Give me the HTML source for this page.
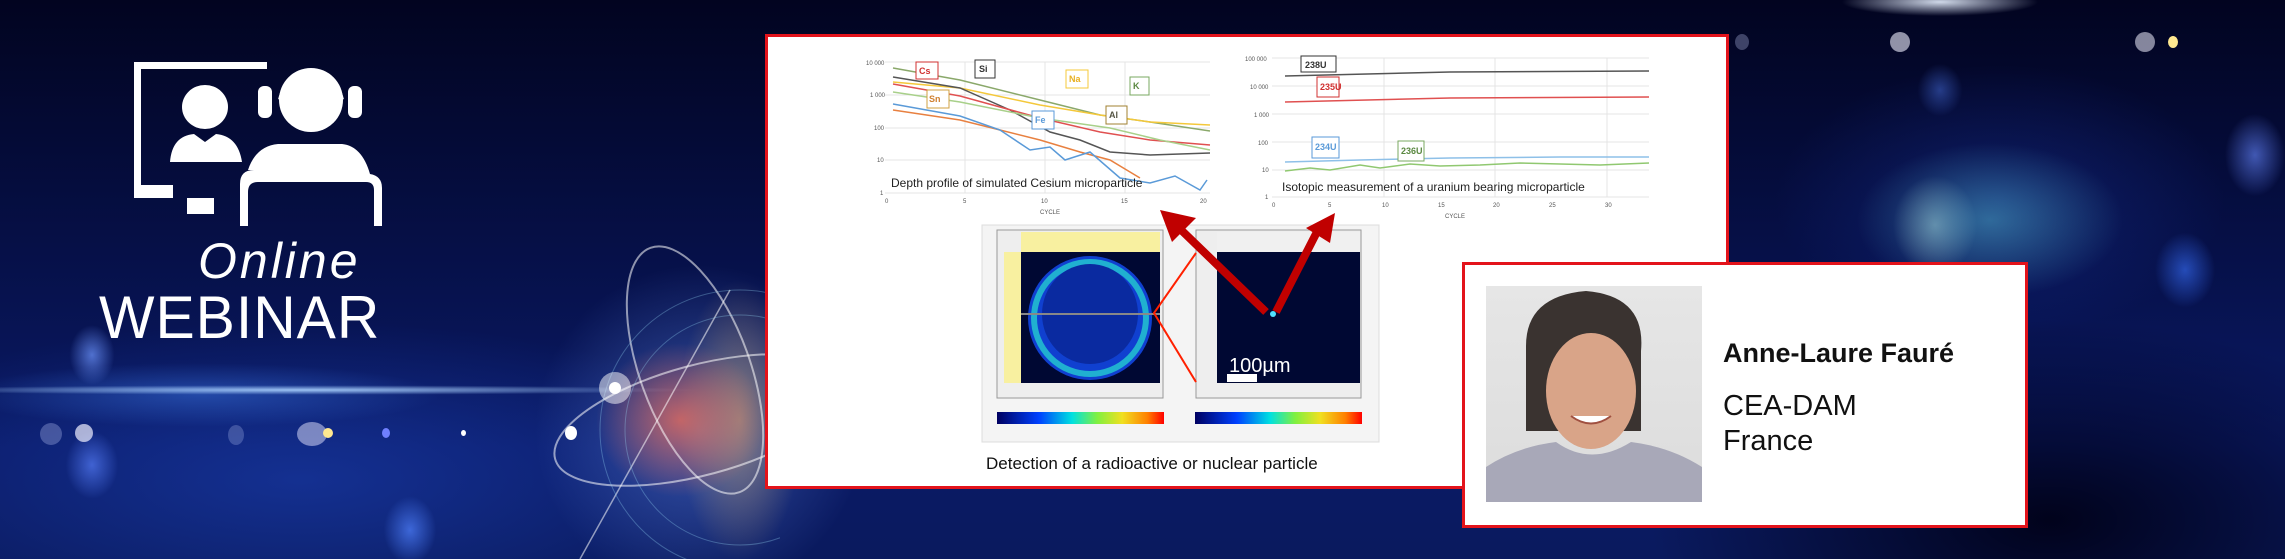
<!DOCTYPE html>
<html><head><meta charset="utf-8"><style>
*{margin:0;padding:0;box-sizing:border-box}
body{width:2285px;height:559px;overflow:hidden;position:relative;font-family:"Liberation Sans",sans-serif;
background:
radial-gradient(ellipse 190px 110px at 1990px 220px,rgba(90,200,220,.45),transparent 70%),
radial-gradient(ellipse 60px 70px at 1935px 225px,rgba(210,240,230,.45),transparent 70%),
radial-gradient(ellipse 40px 55px at 2255px 155px,rgba(90,120,230,.7),transparent 75%),
radial-gradient(ellipse 40px 50px at 2185px 270px,rgba(50,100,230,.7),transparent 75%),
radial-gradient(ellipse 30px 35px at 1940px 90px,rgba(70,110,220,.5),transparent 75%),
radial-gradient(ellipse 300px 180px at 2000px 200px,rgba(30,60,180,.35),transparent 75%),
radial-gradient(ellipse 140px 20px at 1940px 2px,rgba(230,240,255,.9),transparent 70%),
radial-gradient(ellipse 500px 250px at 2050px 520px,rgba(0,0,20,.9),transparent 80%),
radial-gradient(ellipse 120px 110px at 680px 420px,rgba(255,110,80,.7),transparent 70%),
radial-gradient(ellipse 90px 200px at 740px 420px,rgba(255,200,110,.45),transparent 70%),
radial-gradient(ellipse 220px 220px at 700px 430px,rgba(100,140,230,.5),transparent 75%),
radial-gradient(ellipse 35px 45px at 92px 465px,rgba(90,130,255,.65),transparent 75%),
radial-gradient(ellipse 30px 40px at 92px 355px,rgba(110,150,255,.7),transparent 75%),
radial-gradient(ellipse 35px 45px at 410px 530px,rgba(80,130,255,.7),transparent 75%),
radial-gradient(ellipse 500px 6px at 300px 390px,rgba(170,210,255,.9),transparent 80%),
radial-gradient(ellipse 300px 40px at 200px 395px,rgba(60,120,230,.45),transparent 80%),
radial-gradient(ellipse 600px 200px at 300px 480px,rgba(30,70,190,.5),transparent 80%),
linear-gradient(180deg,#020420 0%,#061048 45%,#0a1a66 80%,#0a1a5e 100%);}
.abs{position:absolute}
.dot{position:absolute;border-radius:50%}
</style></head><body>

<div class="dot" style="left:40px;top:423px;width:22px;height:22px;background:rgba(200,210,255,.3)"></div>
<div class="dot" style="left:75px;top:424px;width:18px;height:18px;background:rgba(240,240,255,.7)"></div>
<div class="dot" style="left:228px;top:425px;width:16px;height:20px;background:rgba(200,210,255,.25)"></div>
<div class="dot" style="left:297px;top:422px;width:30px;height:24px;background:rgba(230,230,255,.5)"></div>
<div class="dot" style="left:323px;top:428px;width:10px;height:10px;background:#ffe890"></div>
<div class="dot" style="left:382px;top:428px;width:8px;height:10px;background:#7080ff"></div>
<div class="dot" style="left:461px;top:430px;width:5px;height:6px;background:#fff"></div>
<div class="dot" style="left:565px;top:426px;width:12px;height:14px;background:#fff"></div>
<div class="dot" style="left:1735px;top:34px;width:14px;height:16px;background:rgba(200,210,255,.3)"></div>
<div class="dot" style="left:1890px;top:32px;width:20px;height:20px;background:rgba(240,240,255,.6)"></div>
<div class="dot" style="left:2135px;top:32px;width:20px;height:20px;background:rgba(240,240,255,.55)"></div>
<div class="dot" style="left:2168px;top:36px;width:10px;height:12px;background:#ffe890"></div>

<!-- atom rings -->
<svg class="abs" style="left:520px;top:220px" width="260" height="339" viewBox="0 0 260 339">
<g fill="none" stroke="rgba(255,255,255,.55)" stroke-width="2">
<ellipse cx="175" cy="150" rx="55" ry="130" transform="rotate(-20 175 150)"/>
<ellipse cx="180" cy="200" rx="150" ry="55" transform="rotate(-15 180 200)"/>
<path d="M60 339 L210 70" stroke-width="1.5"/>
</g>
<g fill="none" stroke="rgba(160,230,255,.3)" stroke-width="1">
<circle cx="220" cy="210" r="140"/><circle cx="220" cy="210" r="115"/>
</g>
<circle cx="95" cy="168" r="16" fill="rgba(255,255,255,.5)"/>
<circle cx="95" cy="168" r="6" fill="#fff"/>
</svg>

<!-- webinar icon -->
<svg class="abs" style="left:130px;top:50px" width="260" height="180" viewBox="0 0 260 180">
<g fill="#fff">
<path d="M4 12 h133 v7 h-126 v116 h32 v13 h-39 z"/>
<rect x="57" y="148" width="27" height="16"/>
<ellipse cx="75" cy="57" rx="23" ry="22"/>
<path d="M40 112 q2 -26 24 -28 l11 8 l11 -8 q22 2 26 28 z"/>
<circle cx="181" cy="50" r="32"/>
<path d="M152 50 a30 33 0 0 1 58 0" fill="none" stroke="#fff" stroke-width="8"/>
<rect x="128" y="36" width="14" height="32" rx="6"/>
<rect x="218" y="36" width="14" height="32" rx="6"/>
<path d="M110 176 v-42 q0 -14 14 -14 h-6 q8 -24 30 -26 h64 q20 2 28 30 q12 2 12 14 v38 h-8 v-36 q0 -8 -8 -8 h-108 q-10 0 -10 10 v34 z"/>
</g>
</svg>
<div class="abs" style="left:198px;top:232px;color:#fff;font-family:'Liberation Sans',sans-serif;font-style:italic;font-size:50px;font-weight:300;letter-spacing:3px">Online</div>
<div class="abs" style="left:99px;top:288px;color:#fff;font-size:60px;letter-spacing:1px;line-height:60px;transform:scaleX(.98);transform-origin:left">WEBINAR</div>

<!-- main white panel -->
<div class="abs" style="left:765px;top:34px;width:964px;height:455px;background:#fff;border:3px solid #e3131b"></div>
<svg class="abs" style="left:768px;top:37px" width="958" height="449" viewBox="768 37 958 449" font-family="Liberation Sans,sans-serif">
<g stroke="#e4e4e4" stroke-width="1">
<line x1="885" y1="62" x2="1210" y2="62"/><line x1="885" y1="95" x2="1210" y2="95"/><line x1="885" y1="128" x2="1210" y2="128"/><line x1="885" y1="160" x2="1210" y2="160"/><line x1="885" y1="193" x2="1210" y2="193"/>
<line x1="965" y1="62" x2="965" y2="193"/><line x1="1045" y1="62" x2="1045" y2="193"/><line x1="1125" y1="62" x2="1125" y2="193"/>
</g>
<g font-size="6" fill="#555"><text x="866" y="65">10 000</text><text x="870" y="97">1 000</text><text x="874" y="130">100</text><text x="877" y="162">10</text><text x="880" y="195">1</text>
<text x="885" y="203">0</text><text x="963" y="203">5</text><text x="1041" y="203">10</text><text x="1121" y="203">15</text><text x="1200" y="203">20</text><text x="1040" y="214">CYCLE</text></g>
<g fill="none" stroke-width="1.5">
<polyline stroke="#8aa86a" points="893,68 960,80 1040,100 1100,115 1150,122 1210,131"/>
<polyline stroke="#f4c83a" points="893,82 960,88 1040,105 1100,115 1150,122 1210,125"/>
<polyline stroke="#555" points="893,77 960,88 1010,110 1050,132 1080,140 1110,152 1150,155 1210,153"/>
<polyline stroke="#e05050" points="893,84 960,96 1040,118 1100,132 1150,140 1210,145"/>
<polyline stroke="#a8d08a" points="893,92 960,102 1040,118 1110,128 1160,140 1210,150"/>
<polyline stroke="#e88040" points="893,110 960,120 1000,130 1040,140 1080,152 1110,160 1140,178"/>
<polyline stroke="#5a9ad8" points="893,104 960,116 1000,130 1030,150 1050,147 1065,160 1090,152 1120,178 1150,183 1175,176 1200,190 1207,180"/>
</g>
<g font-size="9" font-weight="bold">
<rect x="916" y="62" width="22" height="17" fill="#fff" stroke="#d03030"/><text x="919" y="74" fill="#d03030">Cs</text>
<rect x="975" y="60" width="20" height="18" fill="#fff" stroke="#333"/><text x="979" y="72" fill="#333">Si</text>
<rect x="1066" y="70" width="22" height="18" fill="#fff" stroke="#f4c83a"/><text x="1069" y="82" fill="#e8b020">Na</text>
<rect x="1130" y="77" width="19" height="18" fill="#fff" stroke="#7aa860"/><text x="1133" y="89" fill="#5a8840">K</text>
<rect x="927" y="90" width="22" height="18" fill="#fff" stroke="#d0a040"/><text x="929" y="102" fill="#d08030">Sn</text>
<rect x="1032" y="111" width="22" height="18" fill="#fff" stroke="#5a9ad8"/><text x="1035" y="123" fill="#5a9ad8">Fe</text>
<rect x="1106" y="106" width="21" height="18" fill="#fff" stroke="#a08030"/><text x="1109" y="118" fill="#554">Al</text>
</g>
<text x="891" y="187" font-size="12" fill="#222">Depth profile of simulated Cesium microparticle</text>
<g stroke="#e4e4e4" stroke-width="1">
<line x1="1272" y1="58" x2="1649" y2="58"/><line x1="1272" y1="86" x2="1649" y2="86"/><line x1="1272" y1="114" x2="1649" y2="114"/><line x1="1272" y1="142" x2="1649" y2="142"/><line x1="1272" y1="170" x2="1649" y2="170"/><line x1="1272" y1="197" x2="1649" y2="197"/>
<line x1="1384" y1="58" x2="1384" y2="197"/><line x1="1495" y1="58" x2="1495" y2="197"/><line x1="1607" y1="58" x2="1607" y2="197"/>
</g>
<g font-size="6" fill="#555"><text x="1245" y="61">100 000</text><text x="1250" y="89">10 000</text><text x="1254" y="117">1 000</text><text x="1258" y="145">100</text><text x="1262" y="172">10</text><text x="1265" y="199">1</text>
<text x="1272" y="207">0</text><text x="1328" y="207">5</text><text x="1382" y="207">10</text><text x="1438" y="207">15</text><text x="1493" y="207">20</text><text x="1549" y="207">25</text><text x="1605" y="207">30</text><text x="1445" y="218">CYCLE</text></g>
<g fill="none" stroke-width="1.5">
<polyline stroke="#555" points="1285,76 1450,72 1649,71"/>
<polyline stroke="#e05050" points="1285,102 1450,98 1649,97"/>
<polyline stroke="#8ec0e8" points="1285,162 1360,160 1450,158 1560,157 1649,157"/>
<polyline stroke="#90c870" points="1285,171 1310,168 1330,170 1360,165 1380,168 1410,164 1440,166 1480,165 1520,163 1560,164 1600,165 1649,163"/>
</g>
<g font-size="9" font-weight="bold">
<rect x="1301" y="56" width="35" height="16" fill="#fff" stroke="#333"/><text x="1305" y="68" fill="#333">238U</text>
<rect x="1317" y="77" width="22" height="20" fill="#fff" stroke="#d03030"/><text x="1320" y="90" fill="#d03030">235U</text>
<rect x="1312" y="137" width="27" height="21" fill="#fff" stroke="#5a9ad8"/><text x="1315" y="150" fill="#5a9ad8">234U</text>
<rect x="1398" y="141" width="26" height="20" fill="#fff" stroke="#7aa860"/><text x="1401" y="154" fill="#5a8840">236U</text>
</g>
<text x="1282" y="191" font-size="12" fill="#222">Isotopic measurement of a uranium bearing microparticle</text>
<rect x="982" y="225" width="397" height="217" fill="#f4f4f4" stroke="#ddd"/>
<rect x="997" y="230" width="166" height="168" fill="#eee" stroke="#999"/>
<rect x="1021" y="232" width="139" height="20" fill="#f8f0a0"/>
<rect x="1004" y="252" width="17" height="131" fill="#f8f0a0"/>
<rect x="1021" y="252" width="139" height="131" fill="#000833"/>
<ellipse cx="1090" cy="318" rx="62" ry="62" fill="#1040d0"/>
<ellipse cx="1090" cy="318" rx="56" ry="56" fill="none" stroke="#20b0d0" stroke-width="6"/>
<ellipse cx="1090" cy="314" rx="48" ry="50" fill="#0a2aa0"/>
<line x1="1021" y1="314" x2="1160" y2="314" stroke="#888" stroke-width="2"/>
<rect x="1196" y="230" width="165" height="168" fill="#eee" stroke="#999"/>
<rect x="1217" y="232" width="143" height="20" fill="#f0f0f0"/>
<rect x="1217" y="252" width="143" height="131" fill="#000833"/>
<circle cx="1273" cy="314" r="3" fill="#50e0ff"/>
<text x="1229" y="372" font-size="20" fill="#fff">100µm</text>
<rect x="1227" y="374" width="30" height="8" fill="#fff"/>
<defs><linearGradient id="cb"><stop offset="0" stop-color="#000060"/><stop offset=".25" stop-color="#0040ff"/><stop offset=".45" stop-color="#00e0e0"/><stop offset=".6" stop-color="#80f040"/><stop offset=".75" stop-color="#f0e020"/><stop offset=".9" stop-color="#ff8000"/><stop offset="1" stop-color="#ff0000"/></linearGradient></defs>
<rect x="997" y="412" width="167" height="12" fill="url(#cb)"/>
<rect x="1195" y="412" width="167" height="12" fill="url(#cb)"/>
<polyline points="1196,253 1154,313 1196,382" fill="none" stroke="#ff2000" stroke-width="2"/>
<g stroke="#c00000" stroke-width="8" fill="none"><line x1="1266" y1="312" x2="1176" y2="225"/><line x1="1276" y1="312" x2="1320" y2="226"/></g>
<polygon points="1160,210 1196,218 1172,242" fill="#c00000"/>
<polygon points="1335,213 1330,243 1306,228" fill="#c00000"/>
<text x="986" y="469" font-size="17" fill="#111">Detection of a radioactive or nuclear particle</text>
</svg>

<div class="abs" style="left:1462px;top:262px;width:566px;height:266px;background:#fff;border:3px solid #e3131b"></div>
<div class="abs" style="left:1486px;top:286px;width:216px;height:216px;background:linear-gradient(#e6e6e6,#dcdcdc)">
<svg width="216" height="216" viewBox="0 0 216 216">
<path d="M40 60 q0 -50 60 -55 q60 5 55 60 l0 80 l-115 0 z" fill="#3a3330"/>
<ellipse cx="105" cy="105" rx="45" ry="58" fill="#d9a488"/>
<path d="M70 165 q35 20 70 0 l0 15 q-35 15 -70 0z" fill="#c89078"/>
<path d="M0 216 l0 -35 q30 -20 70 -25 q35 25 75 0 q40 5 71 25 l0 35 z" fill="#a8a8b8"/>
<path d="M85 130 q20 15 40 0" fill="#fff" stroke="#a05040" stroke-width="2"/>
</svg></div>
<div class="abs" style="left:1723px;top:338px;font-size:27px;font-weight:bold;color:#111">Anne-Laure Fauré</div>
<div class="abs" style="left:1723px;top:389px;font-size:29px;color:#111;line-height:35px">CEA-DAM<br>France</div>
</body></html>
